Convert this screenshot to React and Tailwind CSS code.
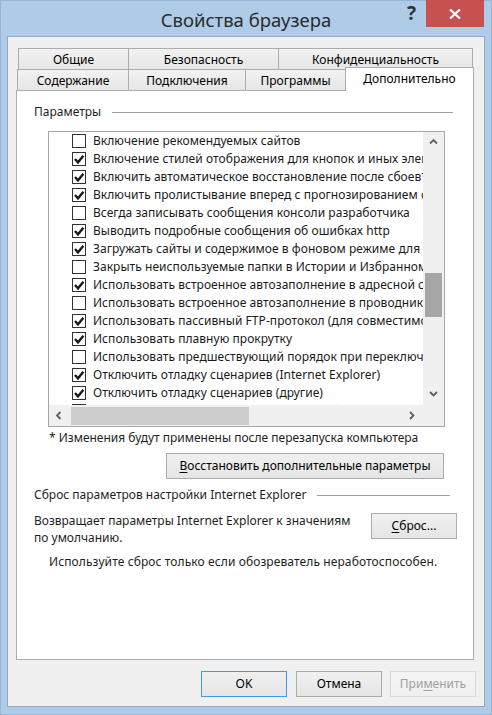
import React from 'react';

const items = [
  [false, 'Включение рекомендуемых сайтов'],
  [true, 'Включение стилей отображения для кнопок и иных элементов управления на веб-страницах'],
  [true, 'Включить автоматическое восстановление после сбоев*'],
  [true, 'Включить пролистывание вперед с прогнозированием страниц'],
  [false, 'Всегда записывать сообщения консоли разработчика'],
  [true, 'Выводить подробные сообщения об ошибках http'],
  [true, 'Загружать сайты и содержимое в фоновом режиме для оптимизации производительности*'],
  [false, 'Закрыть неиспользуемые папки в Истории и Избранном*'],
  [true, 'Использовать встроенное автозаполнение в адресной строке проводника'],
  [false, 'Использовать встроенное автозаполнение в проводнике и в диалоговом окне'],
  [true, 'Использовать пассивный FTP-протокол (для совместимости с брандмауэрами и DSL-модемами)'],
  [true, 'Использовать плавную прокрутку'],
  [false, 'Использовать предшествующий порядок при переключении вкладок с помощью Ctrl+Tab'],
  [true, 'Отключить отладку сценариев (Internet Explorer)'],
  [true, 'Отключить отладку сценариев (другие)'],
  [false, 'Показывать уведомление о каждой ошибке сценария'],
];

function Check({ on }) {
  return (
    <svg width="14" height="14" viewBox="0 0 14 14" className="shrink-0">
      <rect x="0.5" y="0.5" width="13" height="13" fill="#fff" stroke="#333" />
      {on && <path d="M3 7 L6 10.3 L11.4 3.8" fill="none" stroke="#1a1a1a" strokeWidth="2.4" />}
    </svg>
  );
}

function Chevron({ dir }) {
  const d = {
    up: 'M1 5.5 L4.5 2 L8 5.5',
    down: 'M1 2 L4.5 5.5 L8 2',
    left: 'M5.5 1 L2 4.5 L5.5 8',
    right: 'M2 1 L5.5 4.5 L2 8',
  }[dir];
  return (
    <svg width="9" height="9" viewBox="0 0 9 9">
      <path d={d} fill="none" stroke="#606060" strokeWidth="1.8" />
    </svg>
  );
}

function Tab({ children, className }) {
  return (
    <div
      className={`h-full flex items-center justify-center border border-[#acacac] bg-gradient-to-b from-[#f2f2f2] to-[#e6e6e6] pt-[1px] ${className}`}
    >
      {children}
    </div>
  );
}

function Btn({ children, className = '' }) {
  return (
    <div
      className={`h-[26px] flex items-center justify-center border bg-gradient-to-b from-[#f0f0f0] to-[#e5e5e5] ${className}`}
    >
      {children}
    </div>
  );
}

export default function App() {
  return (
    <div className="w-[492px] h-[715px] bg-[#aecbe8] border border-[#98b5d6] flex flex-col font-['Noto_Sans',sans-serif] text-[12px] text-black">
      {/* title bar */}
      <div className="h-[35px] shrink-0 grid grid-cols-[1fr_auto_1fr]">
        <div />
        <div className="flex items-center pt-[3px] text-[18.5px] text-[#2b2b2b] whitespace-nowrap">
          Свойства браузера
        </div>
        <div className="flex justify-end items-start pr-[7px] -mt-px">
          <div className="w-[29px] h-[27px] flex items-center justify-center text-[19px] font-bold text-[#333]">
            ?
          </div>
          <div className="w-[58px] h-[27px] bg-[#c75050] flex items-center justify-center">
            <svg width="12" height="10" viewBox="0 0 12 10">
              <path d="M1 0.5 L11 9.5 M11 0.5 L1 9.5" stroke="#fff" strokeWidth="2.2" />
            </svg>
          </div>
        </div>
      </div>

      {/* client */}
      <div className="flex-1 mx-[6px] mb-[7px] border border-[#8ea8c5] bg-[#f0f0f0] flex flex-col pl-[8px] pr-[10px] pt-[11px]">
        {/* tabs */}
        <div className="h-[21px] flex pl-[2px] leading-[16px]">
          <Tab className="w-[111px] border-b-0">Общие</Tab>
          <Tab className="w-[151px] -ml-px border-b-0">Безопасность</Tab>
          <Tab className="w-[195px] -ml-px border-b-0">Конфиденциальность</Tab>
        </div>
        <div className="h-[21px] flex items-end pl-[1px] relative z-10 leading-[16px]">
          <Tab className="w-[112px] border-b-0">Содержание</Tab>
          <Tab className="w-[118px] -ml-px border-b-0">Подключения</Tab>
          <Tab className="w-[101px] -ml-px border-b-0">Программы</Tab>
          <div className="w-[129px] h-[24px] -ml-px mb-[-1px] bg-white border border-b-0 border-[#acacac] flex items-center justify-center pb-[1px]">
            Дополнительно
          </div>
        </div>

        {/* panel */}
        <div className="h-[570px] bg-white border border-[#acacac] flex flex-col leading-[16px]">
          <div className="mt-[13px] h-[16px] flex items-center pl-[17px] pr-[20px] gap-[11px]">
            <span className="text-[#1e1e1e]">Параметры</span>
            <div className="flex-1 h-px bg-[#a0a0a0]" />
          </div>

          {/* list box */}
          <div className="mt-[11px] ml-[31px] w-[397px] h-[296px] border border-[#a6a6a6] grid grid-cols-[1fr_21px] grid-rows-[1fr_21px]">
            <div className="overflow-hidden bg-white">
              {items.map(([on, label], i) => (
                <div key={i} className="h-[18px] flex items-center pl-[23px] gap-[7px] whitespace-nowrap">
                  <Check on={on} />
                  <span className="leading-[18px] text-[#1a1a1a] tracking-[0.05px]">{label}</span>
                </div>
              ))}
            </div>
            <div className="bg-[#f0f0f0] flex flex-col">
              <div className="h-[21px] flex items-center justify-center">
                <Chevron dir="up" />
              </div>
              <div className="flex-1 flex flex-col px-[2px]">
                <div className="h-[120px]" />
                <div className="h-[44px] bg-[#a6a6a6]" />
              </div>
              <div className="h-[21px] flex items-center justify-center">
                <Chevron dir="down" />
              </div>
            </div>
            <div className="bg-[#f0f0f0] flex">
              <div className="w-[21px] flex items-center justify-center">
                <Chevron dir="left" />
              </div>
              <div className="flex-1 flex items-center">
                <div className="ml-px w-[178px] h-[18px] bg-[#cdcdcd]" />
              </div>
              <div className="w-[21px] flex items-center justify-center">
                <Chevron dir="right" />
              </div>
            </div>
            <div className="bg-[#f0f0f0]" />
          </div>

          <div className="mt-[3px] ml-[32px] h-[16px] text-[#1e1e1e]">
            * Изменения будут применены после перезапуска компьютера
          </div>

          <Btn className="mt-[7px] ml-[149px] w-[278px] border-[#acacac]">
            <span>
              <u className="underline-offset-2">В</u>осстановить дополнительные параметры
            </span>
          </Btn>

          <div className="mt-[8px] h-[16px] flex items-center pl-[17px] pr-[23px] gap-[10px]">
            <span className="text-[#1e1e1e] whitespace-nowrap">Сброс параметров настройки Internet Explorer</span>
            <div className="flex-1 h-px bg-[#a0a0a0]" />
          </div>

          <div className="mt-[9px] flex justify-between pl-[17px] pr-[16px]">
            <div className="leading-[17px] text-[#1e1e1e]">
              Возвращает параметры Internet Explorer к значениям
              <br />
              по умолчанию.
            </div>
            <Btn className="mt-px w-[86px] border-[#acacac]">
              <span>
                <u className="underline-offset-2">С</u>брос...
              </span>
            </Btn>
          </div>

          <div className="mt-[8px] ml-[32px] h-[16px] text-[#1e1e1e] tracking-[0.1px]">
            Используйте сброс только если обозреватель неработоспособен.
          </div>
        </div>

        {/* dialog buttons */}
        <div className="mt-[11px] flex justify-end -mr-[2px] leading-[16px]">
          <Btn className="w-[86px] border-[#3c9be8]">OK</Btn>
          <Btn className="ml-[9px] w-[86px] border-[#acacac]">Отмена</Btn>
          <Btn className="ml-[8px] w-[86px] border-[#d9d9d9] from-[#f4f4f4] to-[#f0f0f0] text-[#a0a0a0]">
            <span>
              При<u className="underline-offset-2">м</u>енить
            </span>
          </Btn>
        </div>
      </div>
    </div>
  );
}
